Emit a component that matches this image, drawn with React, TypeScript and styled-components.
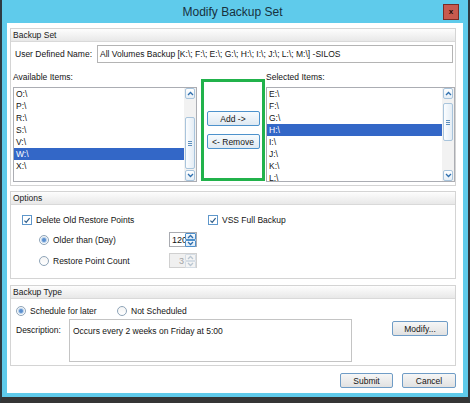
import React from 'react';
import styled, { createGlobalStyle } from 'styled-components';

const GlobalStyle = createGlobalStyle`
  html, body {
    margin: 0;
    padding: 0;
  }
  body {
    font-family: 'Liberation Sans', Arial, sans-serif;
    font-size: 8.5px;
    color: #141414;
  }
`;

const AVAILABLE = ['O:\\', 'P:\\', 'R:\\', 'S:\\', 'V:\\', 'W:\\', 'X:\\'];
const SELECTED = ['E:\\', 'F:\\', 'G:\\', 'H:\\', 'I:\\', 'J:\\', 'K:\\', 'L:\\'];

const App: React.FC = () => {
  return (
    <>
      <GlobalStyle />
      <Window>
        <TitleBar>
          <span />
          <Title>Modify Backup Set</Title>
          <CloseBtn>x</CloseBtn>
        </TitleBar>
        <Client>
          <Group>
            <GroupHeader>Backup Set</GroupHeader>
            <NameRow>
              <NameLabel>User Defined Name:</NameLabel>
              <TextInput>
                All Volumes Backup [K:\; F:\; E:\; G:\; H:\; I:\; J:\; L:\; M:\] -SILOS
              </TextInput>
            </NameRow>
            <ListRow>
              <ListColumn width={184}>
                <ListLabel>Available Items:</ListLabel>
                <ListBox
                  items={AVAILABLE}
                  selected={5}
                  thumb={[18, 52, 1]}
                />
              </ListColumn>
              <TransferBox>
                <ActionBtn>Add -&gt;</ActionBtn>
                <ActionBtn>&lt;- Remove</ActionBtn>
              </TransferBox>
              <ListColumn width={189}>
                <ListLabel>Selected Items:</ListLabel>
                <ListBox items={SELECTED} selected={3} thumb={[4, 38, 29]} />
              </ListColumn>
            </ListRow>
          </Group>

          <Group spacing={5}>
            <GroupHeader>Options</GroupHeader>
            <OptionsBody>
              <OptionRow indent={7} height={10}>
                <OptionCell width={186}>
                  <CheckBox />
                  <span>Delete Old Restore Points</span>
                </OptionCell>
                <OptionCell>
                  <CheckBox />
                  <span>VSS Full Backup</span>
                </OptionCell>
              </OptionRow>
              <OptionRow indent={24} height={15} gap={7}>
                <OptionCell width={130}>
                  <Radio checked />
                  <span>Older than (Day)</span>
                </OptionCell>
                <SpinBox value="120" />
              </OptionRow>
              <OptionRow indent={24} height={15} gap={6}>
                <OptionCell width={130}>
                  <Radio />
                  <span>Restore Point Count</span>
                </OptionCell>
                <SpinBox value="3" disabled />
              </OptionRow>
            </OptionsBody>
          </Group>

          <Group spacing={6}>
            <GroupHeader>Backup Type</GroupHeader>
            <TypeBody>
              <OptionRow indent={0} height={10}>
                <OptionCell width={101}>
                  <Radio checked />
                  <span>Schedule for later</span>
                </OptionCell>
                <OptionCell>
                  <Radio />
                  <span>Not Scheduled</span>
                </OptionCell>
              </OptionRow>
              <DescRow>
                <DescLabel>Description:</DescLabel>
                <DescArea>Occurs every 2 weeks on Friday at 5:00</DescArea>
                <DialogBtn width={56}>Modify...</DialogBtn>
              </DescRow>
            </TypeBody>
          </Group>

          <Footer>
            <DialogBtn width={53}>Submit</DialogBtn>
            <DialogBtn width={54}>Cancel</DialogBtn>
          </Footer>
        </Client>
      </Window>
    </>
  );
};

export default App;

/* ---------- list box with scrollbar ---------- */

interface ListBoxProps {
  items: string[];
  selected: number;
  thumb: [number, number, number]; // track above, thumb, track below
}

const ListBox: React.FC<ListBoxProps> = ({ items, selected, thumb }) => (
  <ListFrame>
    <ListItems>
      {items.map((item, idx) => (
        <ListItem key={item} active={idx === selected}>
          {item}
        </ListItem>
      ))}
    </ListItems>
    <ScrollBar>
      <ScrollBtn>
        <Chevron up />
      </ScrollBtn>
      <Track style={{ height: thumb[0] }} />
      <Thumb style={{ height: thumb[1] }}>
        <Grip />
      </Thumb>
      <Track style={{ flex: 1 }} />
      <ScrollBtn>
        <Chevron />
      </ScrollBtn>
    </ScrollBar>
  </ListFrame>
);

const Chevron: React.FC<{ up?: boolean; faded?: boolean }> = ({ up, faded }) => (
  <svg width="7" height="5" viewBox="0 0 7 5">
    <path
      d={up ? 'M1 4 L3.5 1.5 L6 4' : 'M1 1 L3.5 3.5 L6 1'}
      fill="none"
      stroke={faded ? '#b9c6d2' : '#2f6fae'}
      strokeWidth="1.3"
    />
  </svg>
);

const CheckBox: React.FC = () => (
  <CheckFrame>
    <svg width="9" height="9" viewBox="0 0 9 9">
      <path
        d="M1.6 4.6 L3.6 6.6 L7.4 1.8"
        fill="none"
        stroke="#2b5a86"
        strokeWidth="1.3"
      />
    </svg>
  </CheckFrame>
);

const Radio: React.FC<{ checked?: boolean }> = ({ checked }) => (
  <RadioFrame>{checked && <RadioDot />}</RadioFrame>
);

const SpinBox: React.FC<{ value: string; disabled?: boolean }> = ({
  value,
  disabled,
}) => (
  <SpinFrame disabled={disabled}>
    <SpinField disabled={disabled}>{value}</SpinField>
    <SpinButtons>
      <SpinBtn disabled={disabled}>
        <Chevron up faded={disabled} />
      </SpinBtn>
      <SpinBtn disabled={disabled}>
        <Chevron faded={disabled} />
      </SpinBtn>
    </SpinButtons>
  </SpinFrame>
);

/* ---------- window ---------- */

const Window = styled.div`
  width: 470px;
  height: 403px;
  box-sizing: border-box;
  background: #5fcbeb;
  border-left: 2px solid #2e3b42;
  border-right: 2px solid #2e3b42;
  border-bottom: 6px solid #353535;
  display: flex;
  flex-direction: column;
`;

const TitleBar = styled.div`
  height: 23px;
  flex: none;
  display: grid;
  grid-template-columns: 1fr auto 1fr;
  align-items: center;
  padding: 0 9px 0 4px;
`;

const Title = styled.div`
  font-size: 12px;
  color: #17313d;
  padding-top: 1px;
`;

const CloseBtn = styled.div`
  justify-self: end;
  width: 16px;
  height: 16px;
  box-sizing: border-box;
  background: #c85a4f;
  border: 1px solid #7b2c26;
  color: #1d0a08;
  font-weight: bold;
  font-size: 8px;
  line-height: 13px;
  text-align: center;
`;

const Client = styled.div`
  flex: 1;
  margin: 0 5px 4px;
  background: #ffffff;
  padding: 5px 7px 0 3px;
  display: flex;
  flex-direction: column;
`;

/* ---------- group boxes ---------- */

const Group = styled.div<{ spacing?: number }>`
  border: 1px solid #d4d4d4;
  margin-top: ${p => p.spacing || 0}px;
  display: flex;
  flex-direction: column;
`;

const GroupHeader = styled.div`
  height: 12px;
  padding-left: 2px;
  background: linear-gradient(#fdfdfd, #e8e8e8);
  border-bottom: 1px solid #d9d9d9;
  display: flex;
  align-items: center;
  color: #1a1a1a;
`;

const NameRow = styled.div`
  display: flex;
  align-items: center;
  margin-top: 3px;
  padding: 0 2px 0 4px;
`;

const NameLabel = styled.div`
  width: 82px;
`;

const TextInput = styled.div`
  flex: 1;
  height: 18px;
  box-sizing: border-box;
  border: 1px solid #b4b4b4;
  padding-left: 2px;
  display: flex;
  align-items: center;
  white-space: nowrap;
`;

const ListRow = styled.div`
  display: flex;
  align-items: flex-end;
  margin-top: 9px;
  padding: 0 0 3px 2px;
`;

const ListColumn = styled.div<{ width: number }>`
  width: ${p => p.width}px;
  display: flex;
  flex-direction: column;
`;

const ListLabel = styled.div`
  line-height: 10px;
  margin-bottom: 5px;
`;

const ListFrame = styled.div`
  height: 95px;
  box-sizing: border-box;
  border: 1px solid #abadb3;
  display: flex;
  overflow: hidden;
`;

const ListItems = styled.div`
  flex: 1;
  display: flex;
  flex-direction: column;
`;

const ListItem = styled.div<{ active: boolean }>`
  height: 12px;
  flex: none;
  padding-left: 2px;
  display: flex;
  align-items: center;
  background: ${p => (p.active ? '#3367c7' : 'transparent')};
  color: ${p => (p.active ? '#ffffff' : '#141414')};
`;

const ScrollBar = styled.div`
  width: 12px;
  display: flex;
  flex-direction: column;
  background: #f2f2f2;
  padding: 0 1px;
  box-sizing: border-box;
`;

const ScrollBtn = styled.div`
  height: 11px;
  flex: none;
  box-sizing: border-box;
  border: 1px solid #a8c4dc;
  border-radius: 2px;
  background: linear-gradient(#ffffff, #e6eef5);
  display: flex;
  align-items: center;
  justify-content: center;
`;

const Track = styled.div`
  flex: none;
`;

const Thumb = styled.div`
  flex: none;
  box-sizing: border-box;
  border: 1px solid #a8c4dc;
  border-radius: 2px;
  background: linear-gradient(90deg, #fbfdff, #e4edf5);
  display: flex;
  align-items: center;
  justify-content: center;
`;

const Grip = styled.div`
  width: 4px;
  height: 5px;
  background: repeating-linear-gradient(
    #5d8fbd 0,
    #5d8fbd 1px,
    transparent 1px,
    transparent 2px
  );
`;

const TransferBox = styled.div`
  width: 64px;
  height: 102px;
  box-sizing: border-box;
  border: 3px solid #21b24b;
  margin: 0 1px 1px 4px;
  display: flex;
  flex-direction: column;
  align-items: center;
  justify-content: center;
  gap: 8px;
`;

const ActionBtn = styled.div`
  width: 53px;
  height: 15px;
  box-sizing: border-box;
  border: 1px solid #4d92cc;
  border-radius: 2px;
  background: linear-gradient(#f7fbfe, #dfe9f2);
  display: flex;
  align-items: center;
  justify-content: center;
`;

/* ---------- options ---------- */

const OptionsBody = styled.div`
  display: flex;
  flex-direction: column;
  padding: 10px 0 10px 4px;
`;

const OptionRow = styled.div<{ indent: number; height: number; gap?: number }>`
  display: flex;
  align-items: center;
  height: ${p => p.height}px;
  margin-top: ${p => p.gap || 0}px;
  padding-left: ${p => p.indent}px;
`;

const OptionCell = styled.div<{ width?: number }>`
  display: flex;
  align-items: center;
  gap: 4px;
  width: ${p => (p.width ? `${p.width}px` : 'auto')};
`;

const CheckFrame = styled.div`
  width: 10px;
  height: 10px;
  box-sizing: border-box;
  border: 1px solid #5f97cb;
  background: #ffffff;
  display: flex;
  align-items: center;
  justify-content: center;
`;

const RadioFrame = styled.div`
  width: 10px;
  height: 10px;
  box-sizing: border-box;
  border: 1px solid #8ea4b8;
  border-radius: 50%;
  background: linear-gradient(#f4f4f4, #ffffff);
  display: flex;
  align-items: center;
  justify-content: center;
`;

const RadioDot = styled.div`
  width: 4px;
  height: 4px;
  border-radius: 50%;
  background: #5b8fcf;
  box-shadow: 0 0 0 1px #b9d2ec;
`;

const SpinFrame = styled.div<{ disabled?: boolean }>`
  width: 28px;
  height: 15px;
  box-sizing: border-box;
  border: 1px solid ${p => (p.disabled ? '#d0d0d0' : '#a9abb1')};
  background: ${p => (p.disabled ? '#f0f0f0' : '#ffffff')};
  display: flex;
`;

const SpinField = styled.div<{ disabled?: boolean }>`
  flex: 1;
  min-width: 0;
  overflow: hidden;
  display: flex;
  align-items: center;
  justify-content: ${p => (p.disabled ? 'flex-end' : 'flex-start')};
  padding: 0 1px 0 2px;
  font-size: 9px;
  color: ${p => (p.disabled ? '#a3a3a3' : '#141414')};
  white-space: nowrap;
`;

const SpinButtons = styled.div`
  width: 11px;
  flex: none;
  display: flex;
  flex-direction: column;
`;

const SpinBtn = styled.div<{ disabled?: boolean }>`
  flex: 1;
  box-sizing: border-box;
  border: 1px solid ${p => (p.disabled ? '#d5dde5' : '#4d8fcb')};
  border-radius: 1px;
  background: ${p => (p.disabled ? '#f4f4f4' : 'linear-gradient(#f8fbfe, #dce9f5)')};
  display: flex;
  align-items: center;
  justify-content: center;
`;

/* ---------- backup type ---------- */

const TypeBody = styled.div`
  display: flex;
  flex-direction: column;
  padding: 7px 7px 3px 5px;
`;

const DescRow = styled.div`
  display: flex;
  align-items: flex-start;
  margin-top: 3px;
`;

const DescLabel = styled.div`
  width: 53px;
  padding-top: 6px;
`;

const DescArea = styled.div`
  width: 283px;
  height: 43px;
  box-sizing: border-box;
  border: 1px solid #c4c4c4;
  padding: 6px 3px 0;
`;

const DialogBtn = styled.div<{ width: number }>`
  width: ${p => p.width}px;
  height: 15px;
  box-sizing: border-box;
  border: 1px solid #6f9cc6;
  border-radius: 2px;
  background: linear-gradient(#f6f6f6, #e1e1e1);
  display: flex;
  align-items: center;
  justify-content: center;
  margin-left: auto;
  margin-top: 2px;
`;

const Footer = styled.div`
  display: flex;
  justify-content: flex-end;
  gap: 9px;
  margin-top: 5px;

  & > div {
    margin-left: 0;
  }
`;
